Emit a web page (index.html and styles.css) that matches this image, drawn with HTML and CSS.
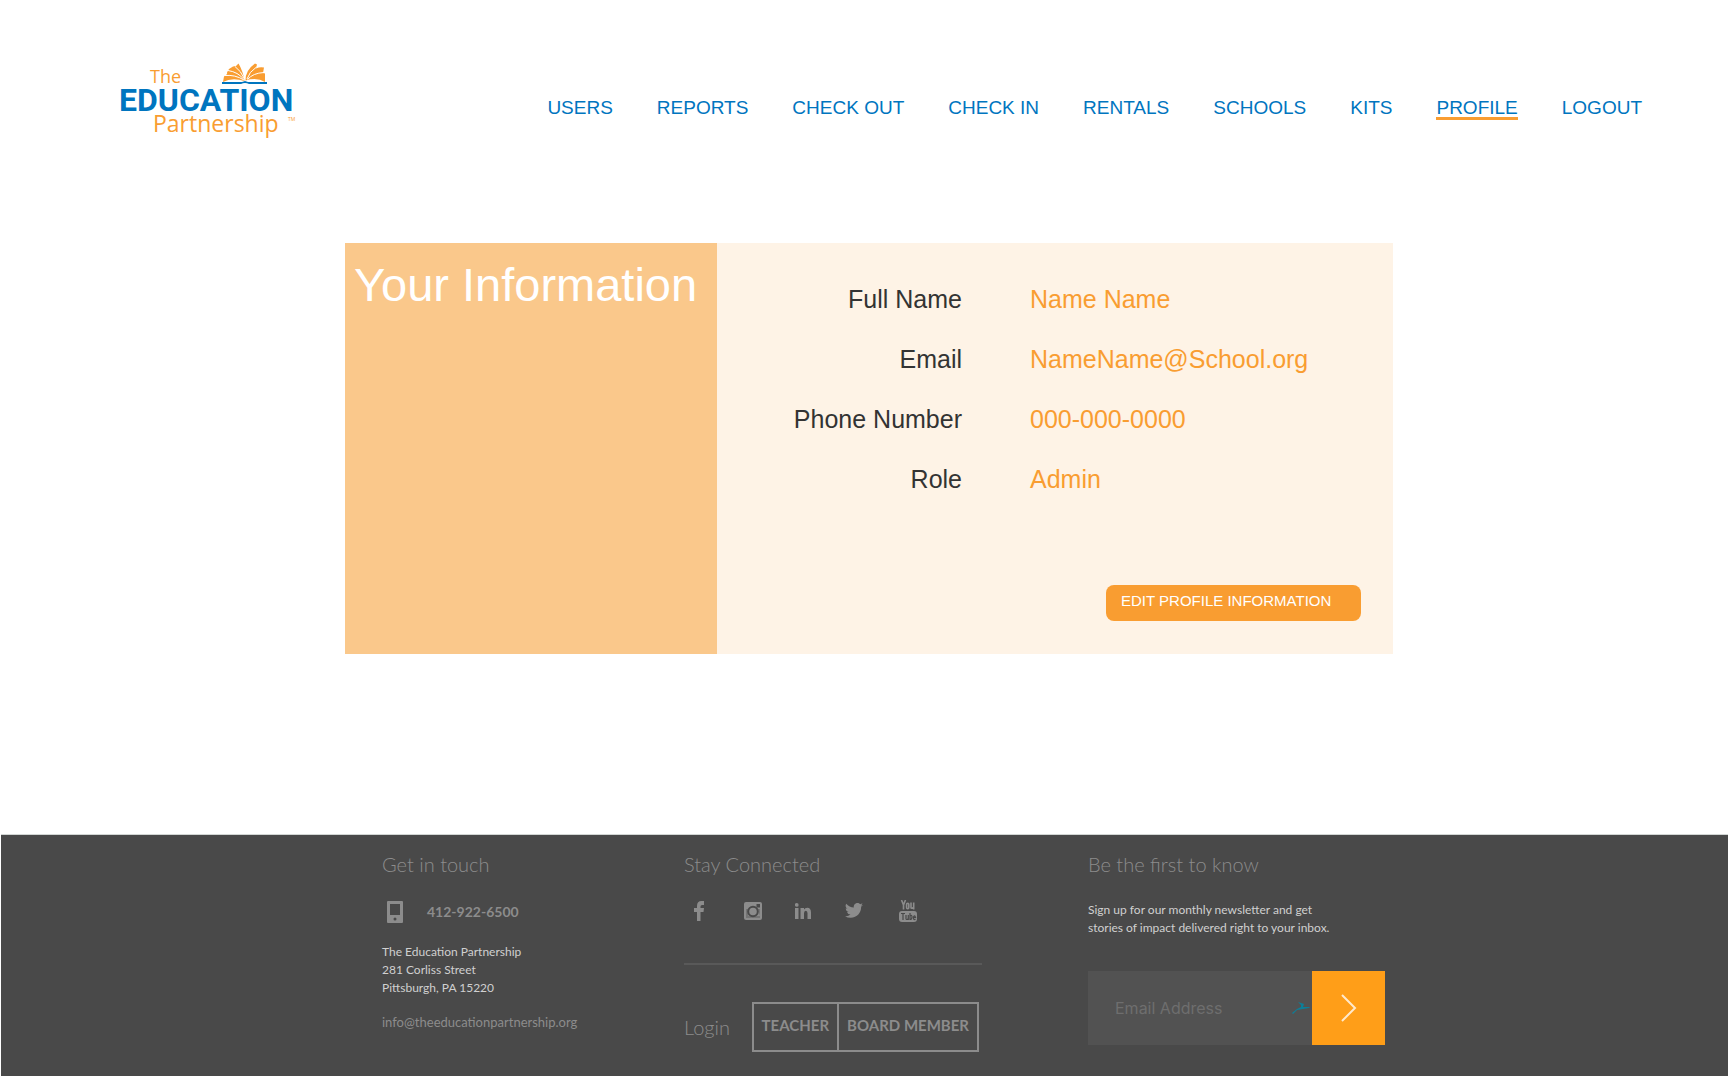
FILE: index.html
```html
<!DOCTYPE html>
<html lang="en">
<head>
<meta charset="utf-8">
<meta name="viewport" content="width=device-width, initial-scale=1">
<title>Profile – The Education Partnership</title>
<link rel="stylesheet" href="styles.css">
</head>
<body>
<header class="site-header">
  <a class="logo" href="#" aria-label="The Education Partnership home">
    <svg width="180" height="80" viewBox="0 0 180 80">
      <text class="logo-light" x="30" y="24" font-size="18">The</text>
      <path d="M103 23L104 17.500Q108 15.500 107 13.500L109 10L113 7.500L116 7L118.500 4.500Q123 12 124.500 22Q112 18 103 23ZM125.500 21.500Q125.500 11 135 4.500L137 5.500L136 9.500Q140 7.500 144 8.500L143 14L145 14.500V23Q137 18 125.500 21.500Z" fill="#f99d31"/>
      <path d="M105 16.500Q115 15.500 124 21M108 11.500Q118 13 124 20.500M115 7.500Q121 12 124 19M127 20Q129 13 136.500 8M127.500 20.500Q133 14 144 13.500" fill="none" stroke="#fff" stroke-width="1"/>
      <path d="M102 23H122L125 22L128 23H147V25H129Q125 23 121 25H102Z" fill="#0075bf"/>
      <text class="logo-bold" x="-1" y="52" font-size="32">EDUCATION</text>
      <text class="logo-light" x="33" y="73" font-size="23">Partnership</text>
      <text class="logo-light" x="168" y="62" font-size="5">TM</text>
    </svg>
  </a>
  <nav class="main-nav" aria-label="Main">
    <a href="#">USERS</a>
    <a href="#">REPORTS</a>
    <a href="#">CHECK OUT</a>
    <a href="#">CHECK IN</a>
    <a href="#">RENTALS</a>
    <a href="#">SCHOOLS</a>
    <a href="#">KITS</a>
    <a class="active" href="#" aria-current="page">PROFILE</a>
    <a href="#">LOGOUT</a>
  </nav>
</header>

<main class="content">
  <section class="card">
    <h1 class="card-title">Your Information</h1>
    <div class="card-body">
      <dl class="details">
        <dt>Full Name</dt><dd>Name Name</dd>
        <dt>Email</dt><dd>NameName@School.org</dd>
        <dt>Phone Number</dt><dd>000-000-0000</dd>
        <dt>Role</dt><dd>Admin</dd>
      </dl>
      <button class="edit-button" type="button">EDIT PROFILE INFORMATION</button>
    </div>
  </section>
</main>

<footer class="site-footer">
  <section class="contact">
    <h2>Get in touch</h2>
    <p class="phone">
      <svg width="16" height="22" viewBox="0 0 16 22"><path fill="#8c8c8c" fill-rule="evenodd" d="M1 0H15Q16 0 16 1V21Q16 22 15 22H1Q0 22 0 21V1Q0 0 1 0ZM3 3V14H13V3ZM8 16.500A1.500 1.500 0 1 0 8 19.500A1.500 1.500 0 1 0 8 16.500Z"/></svg>
      <span>412-922-6500</span>
    </p>
    <address>The Education Partnership<br>281 Corliss Street<br>Pittsburgh, PA 15220</address>
    <a class="email" href="mailto:info@theeducationpartnership.org">info@theeducationpartnership.org</a>
  </section>

  <section class="social">
    <h2>Stay Connected</h2>
    <div class="social-links">
      <a href="#" aria-label="Facebook"><svg width="10" height="20" viewBox="0 0 10 20"><path d="M3 20V11H0V7H3V5Q3 0 7.500 0H10V4H8Q6.500 4 6.500 5.500V7H10L9.500 11H6.500V20Z"/></svg></a>
      <a href="#" aria-label="Instagram"><svg width="18" height="18" viewBox="0 0 18 18"><rect width="18" height="18" rx="2"/><path d="M2 7H4V16H2ZM14 7H16V16H2V14H16Z" fill="#494949" opacity=".35"/><circle cx="9" cy="9.500" r="4.800" fill="none" stroke="#494949" stroke-width="2"/><rect x="12.500" y="2" width="3.500" height="3.500" fill="#494949"/></svg></a>
      <a href="#" aria-label="LinkedIn"><svg width="16" height="16" viewBox="0 0 16 16"><path d="M0 5H3.500V16H0ZM5.500 5H9V6.500Q10 4.700 12.300 4.700Q16 4.700 16 9.500V16H12.500V10.300Q12.500 7.800 10.800 7.800Q9 7.800 9 10.300V16H5.500Z"/><circle cx="1.750" cy="1.900" r="1.900"/></svg></a>
      <a href="#" aria-label="Twitter"><svg width="18" height="15" viewBox="0 0 24 20"><path d="M24 2.400a10 10 0 0 1-2.800.8A5 5 0 0 0 23.300.4a10 10 0 0 1-3.100 1.200 4.900 4.900 0 0 0-8.400 4.500A14 14 0 0 1 1.700 1a4.900 4.900 0 0 0 1.500 6.600A4.900 4.900 0 0 1 1 7v.1a4.900 4.900 0 0 0 3.900 4.800 5 5 0 0 1-2.200.1 4.900 4.900 0 0 0 4.600 3.400A9.900 9.900 0 0 1 0 17.500a14 14 0 0 0 7.500 2.200c9.100 0 14.300-7.700 14-14.600A10 10 0 0 0 24 2.400z"/></svg></a>
      <a href="#" aria-label="YouTube"><svg width="18" height="22" viewBox="0 0 18 22"><g fill="none" stroke="#8c8c8c" stroke-width="1.600"><path d="M2.500 0L4.500 5V9.500M6.500 0L4.500 5"/><rect x="7.600" y="3.300" width="2.200" height="5.400" rx="1.100"/><path d="M12 2.500V7.500Q12 9 14.500 7.500M14.700 2.500V9.500"/></g><rect y="11" width="18" height="11" rx="3"/><g fill="none" stroke="#494949" stroke-width="1.200"><path d="M2 13.500H6M4 13.500V20M7 15V19Q7.500 20 9 19M9.300 15V20M11 13V20M11 16Q13 14.500 13 17T11 19.500M16.500 19Q14.500 20.500 14.500 18V17Q15.500 14.500 16.500 17.500H14.500"/></g></svg></a>
    </div>
    <div class="login">
      <h2>Login</h2>
      <div class="login-buttons">
        <button type="button">TEACHER</button><button type="button">BOARD MEMBER</button>
      </div>
    </div>
  </section>

  <section class="newsletter">
    <h2>Be the first to know</h2>
    <p>Sign up for our monthly newsletter and get<br>stories of impact delivered right to your inbox.</p>
    <form class="signup">
      <input type="email" placeholder="Email Address" aria-label="Email Address">
      <svg class="bird" width="18" height="12" viewBox="0 0 18 12"><path fill="#0c7f99" d="M0 11L5 7L9 5L9 3L6 0L12 2L11 5L18 5L17 6L11 7L5 8L1 12Z"/></svg>
      <button type="submit" aria-label="Sign up"><svg width="16" height="28" viewBox="0 0 16 28"><path d="M1 1L14 14L1 27" fill="none" stroke="#ffe9cc" stroke-width="2"/></svg></button>
    </form>
  </section>
</footer>
</body>
</html>
```

FILE: styles.css
```css
* { box-sizing: border-box; }

body {
  margin: 0;
  min-height: 100vh;
  display: flex;
  flex-direction: column;
  background: #fff;
  font-family: "Liberation Sans", Arial, sans-serif;
}

h1, h2, p, dl, dd { margin: 0; font-weight: 400; }
a { color: inherit; text-decoration: none; }
button, input { font: inherit; border: 0; border-radius: 0; }
svg { display: block; }

/* Header */
.site-header {
  display: flex;
  justify-content: space-between;
  align-items: flex-start;
  padding: 59px 86px 0 120px;
}
.logo svg { overflow: visible; }
.logo-light { font-family: "Open Sans", sans-serif; fill: #f99d31; }
.logo-bold { font-family: Roboto, sans-serif; font-weight: 700; fill: #0075bf; }

.main-nav {
  display: flex;
  gap: 44px;
  padding-top: 40px;
  font-size: 19px;
  line-height: 18px;
  color: #0075bf;
}
.main-nav a { border-bottom: 3px solid transparent; }
.main-nav .active { border-color: #f99d31; }

/* Profile card */
.content {
  flex: 1;
  display: grid;
  grid-template-columns: 345fr minmax(auto, 1048px) 335fr;
  align-content: start;
  padding: 104px 0;
}
.card {
  grid-column: 2;
  display: grid;
  grid-template-columns: 372px 1fr;
  background: #fef3e6;
}
.card-title {
  padding: 14px 9px;
  background: #fac88b;
  color: #fff;
  font-size: 47px;
  line-height: 56px;
}
.card-body {
  display: flex;
  flex-direction: column;
  padding: 26px 32px 33px 0;
}
.details {
  display: grid;
  grid-template-columns: 245px 1fr;
  column-gap: 68px;
  font-size: 25px;
  line-height: 60px;
}
.details dt { color: #333; text-align: right; }
.details dd { color: #f99d31; }
.edit-button {
  align-self: flex-end;
  width: 255px;
  margin-top: 76px;
  padding: 0 15px 4px;
  border-radius: 8px;
  background: #f99d31;
  color: #fff;
  font-size: 15px;
  line-height: 32px;
  text-align: left;
}

/* Footer */
.site-footer {
  display: grid;
  grid-template-columns: 381fr 302px 404px 297px 343fr;
  margin: 0 0 1px 1px;
  padding: 14px 0 24px;
  border-top: 1px solid #d2d6d4;
  background: #494949;
  color: #8c8c8c;
  font-family: Lato, sans-serif;
  font-size: 13px;
  line-height: 18px;
}
.site-footer h2 {
  font-size: 20px;
  font-weight: 300;
  line-height: 30px;
}
.contact { grid-column: 2; }
.phone {
  display: flex;
  align-items: center;
  gap: 24px;
  padding: 22px 0 0 5px;
  font-size: 14px;
  font-weight: 700;
  line-height: 22px;
}
address {
  padding: 20px 0 16px;
  color: #d0d0d0;
  font-size: 12px;
  font-style: normal;
}
.social-links {
  display: grid;
  grid-template-columns: 50px 51px 50px 54px 20px;
  align-items: center;
  width: 298px;
  height: 86px;
  padding: 0 0 21px 10px;
  border-bottom: 2px solid #595959;
  fill: #8c8c8c;
}
.login {
  display: flex;
  align-items: center;
  width: 295px;
  padding-top: 37px;
  justify-content: space-between;
}
.login-buttons { display: flex; }
.login-buttons button {
  height: 50px;
  padding: 0 8px 4px;
  border: 2px solid #8c8c8c;
  background: transparent;
  color: #8c8c8c;
  font-size: 15px;
  font-weight: 700;
}
.login-buttons button + button { margin-left: -2px; }
.newsletter p {
  padding: 22px 0 34px;
  color: #d0d0d0;
  font-size: 12px;
}
.signup {
  display: flex;
  align-items: center;
  height: 74px;
  background: #525252;
}
.signup input {
  flex: 1;
  min-width: 0;
  height: 100%;
  padding: 0 27px;
  background: transparent;
  color: #d0d0d0;
  font-family: Inter, sans-serif;
  font-size: 16px;
}
.signup input::placeholder { color: #6e6e6e; opacity: 1; }
.signup .bird { margin-right: 2px; }
.signup button {
  display: grid;
  place-items: center;
  width: 73px;
  height: 100%;
  background: #ff9e18;
}
```
